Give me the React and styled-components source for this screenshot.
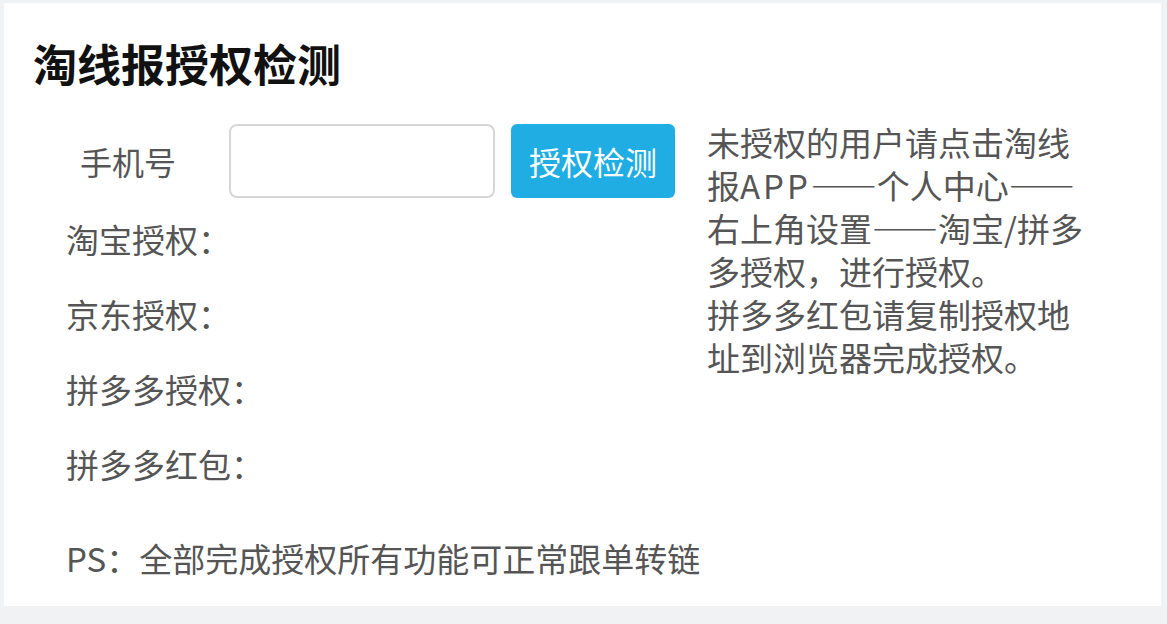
import React from 'react';
import styled, { createGlobalStyle } from 'styled-components';

const GlobalStyle = createGlobalStyle`
  html, body {
    margin: 0;
    padding: 0;
    background: #f1f2f4;
  }
  body {
    font-family: "Noto Sans CJK SC", "Noto Sans", sans-serif;
  }
`;

const StyledPage = styled.div`
  padding: 3px 6px 16px 4px;
  min-height: 100vh;
  box-sizing: border-box;
`;

const StyledCard = styled.section`
  background: #fff;
  padding: 34px 0 26px 29px;
`;

const StyledTitle = styled.h1`
  margin: 0;
  font-size: 44px;
  line-height: 52px;
  font-weight: 700;
  color: #111;
`;

const StyledMain = styled.div`
  display: flex;
  align-items: flex-start;
  margin-top: 35px;
`;

const StyledLeft = styled.div`
  display: flex;
  flex-direction: column;
`;

const StyledFormRow = styled.div`
  display: flex;
  align-items: center;
  height: 74px;
`;

const StyledPhoneLabel = styled.label`
  width: 196px;
  padding-left: 47px;
  box-sizing: border-box;
  font-size: 32px;
  color: #555;
`;

const StyledInput = styled.input`
  width: 266px;
  height: 74px;
  box-sizing: border-box;
  border: 2px solid #d6d6d6;
  border-radius: 8px;
  outline: none;
  font-size: 32px;
  padding: 0 12px;
`;

const StyledButton = styled.button`
  margin-left: 16px;
  height: 74px;
  width: 164px;
  border: none;
  border-radius: 6px;
  background: #20ade4;
  color: #fff;
  font-family: inherit;
  font-size: 32px;
  padding: 0;
  cursor: pointer;
`;

const StyledStatusList = styled.ul`
  list-style: none;
  margin: 4px 0 0;
  padding: 0 0 0 33px;
`;

const StyledStatus = styled.li`
  height: 75px;
  line-height: 75px;
  font-size: 33px;
  color: #555;
`;

const StyledNote = styled.p`
  margin: -3px 0 0 32px;
  width: 385px;
  font-size: 33px;
  line-height: 43px;
  color: #555;
`;

const StyledDash = styled.span`
  font-feature-settings: "fwid" 1;
`;

const StyledLatin = styled.span`
  letter-spacing: 3px;
`;

const StyledFooterNote = styled.p`
  margin: 35px 0 0 33px;
  font-size: 33px;
  line-height: 43px;
  color: #555;
`;

const statuses = ['淘宝授权：', '京东授权：', '拼多多授权：', '拼多多红包：'];

const App = () => (
  <>
    <GlobalStyle />
    <StyledPage>
      <StyledCard>
        <StyledTitle>淘线报授权检测</StyledTitle>
        <StyledMain>
          <StyledLeft>
            <StyledFormRow>
              <StyledPhoneLabel htmlFor="phone">手机号</StyledPhoneLabel>
              <StyledInput id="phone" type="text" />
              <StyledButton type="button">授权检测</StyledButton>
            </StyledFormRow>
            <StyledStatusList>
              {statuses.map(s => (
                <StyledStatus key={s}>{s}</StyledStatus>
              ))}
            </StyledStatusList>
          </StyledLeft>
          <StyledNote>
            未授权的用户请点击淘线报<StyledLatin>APP</StyledLatin>
            <StyledDash>——</StyledDash>个人中心<StyledDash>——</StyledDash>
            右上角设置<StyledDash>——</StyledDash>淘宝/拼多多授权，进行授权。
            <br />
            拼多多红包请复制授权地址到浏览器完成授权。
          </StyledNote>
        </StyledMain>
        <StyledFooterNote>PS：全部完成授权所有功能可正常跟单转链</StyledFooterNote>
      </StyledCard>
    </StyledPage>
  </>
);

export default App;
